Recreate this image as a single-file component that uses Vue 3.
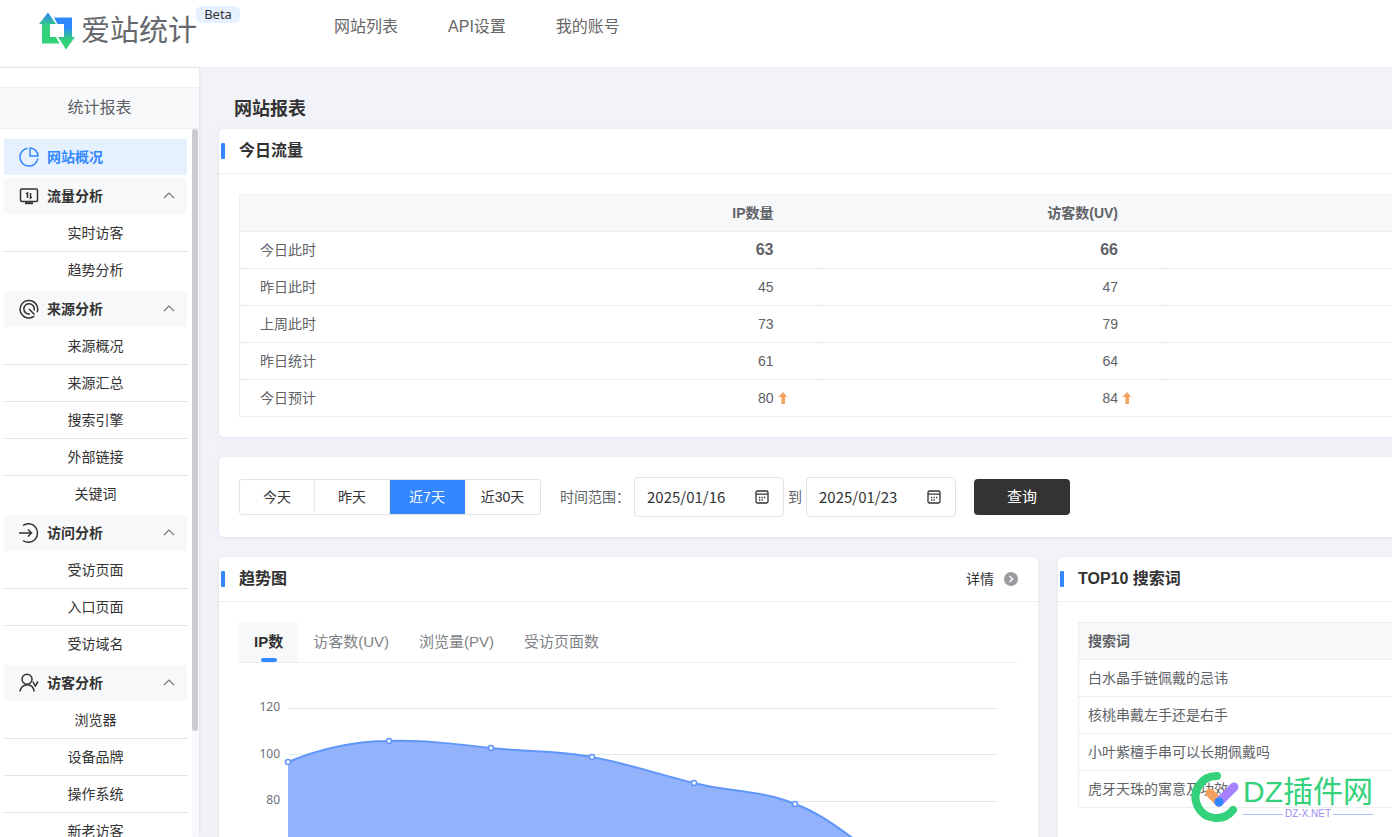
<script setup>
import { ref } from 'vue'

const nav = ['网站列表', 'API设置', '我的账号']
const groups = [
  { name: '流量分析', icon: 'screen', items: ['实时访客', '趋势分析'] },
  { name: '来源分析', icon: 'source', items: ['来源概况', '来源汇总', '搜索引擎', '外部链接', '关键词'] },
  { name: '访问分析', icon: 'enter', items: ['受访页面', '入口页面', '受访域名'] },
  { name: '访客分析', icon: 'user', items: ['浏览器', '设备品牌', '操作系统', '新老访客'] }
]
const rows = [
  { label: '今日此时', ip: 63, uv: 66, strong: true },
  { label: '昨日此时', ip: 45, uv: 47 },
  { label: '上周此时', ip: 73, uv: 79 },
  { label: '昨日统计', ip: 61, uv: 64 },
  { label: '今日预计', ip: 80, uv: 84, up: true }
]
const ranges = ['今天', '昨天', '近7天', '近30天']
const range = ref('近7天')
const from = ref('2025/01/16')
const to = ref('2025/01/23')
const tabs = ['IP数', '访客数(UV)', '浏览量(PV)', '受访页面数']
const tab = ref('IP数')
const words = ['白水晶手链佩戴的忌讳', '核桃串戴左手还是右手', '小叶紫檀手串可以长期佩戴吗', '虎牙天珠的寓意及功效']
const curve = 'M49 99C83 85 117 78 150 78C184 77 218 81 252 85C286 89 319 87 353 94C387 100 421 112 455 120C489 129 522 127 556 141C590 153 618 181 658 206'
const points = [[49, 99], [150, 78], [252, 85], [353, 94], [455, 120], [556, 141]]
</script>

<template>
  <div class="page">
    <header class="top">
      <a class="logo" href="#" aria-label="爱站统计">
        <svg width="36" height="38" viewBox="0 0 36 38">
          <defs>
            <linearGradient id="ga" x1="0" y1="0" x2="0" y2="1"><stop offset="0" stop-color="#2f80ff" /><stop offset=".45" stop-color="#33d17a" /></linearGradient>
            <linearGradient id="gb" x1="0" y1="0" x2="0" y2="1"><stop offset=".3" stop-color="#2f88ff" /><stop offset=".7" stop-color="#33d17a" /></linearGradient>
          </defs>
          <path fill="url(#ga)" d="M9 .5L17 12H11V25H17L20.500 31.500H3V12H0Z" />
          <path fill="url(#gb)" d="M15 5.500H33V25H36L27 37.500L19 25H25V12H18.500Z" />
        </svg>
        <span>爱站统计</span>
      </a>
      <span class="beta">Beta</span>
      <nav><a v-for="n in nav" :key="n" href="#">{{ n }}</a></nav>
    </header>

    <div class="body">
      <aside>
        <h2 class="side-title">统计报表</h2>
        <div class="side-scroll">
          <div class="menu">
            <a class="head active" href="#">
              <svg class="ico" viewBox="0 0 20 20"><path d="M8.500 1.200A9 9 0 1 0 18.800 11.500M11 1V9H19A8.200 8.200 0 0 0 11 1Z" /></svg>
              网站概况
            </a>
            <div v-for="g in groups" :key="g.name" class="group">
              <button class="head">
                <svg class="ico" viewBox="0 0 20 20">
                  <g v-if="g.icon === 'screen'"><rect x="1.500" y="3" width="17" height="12.500" rx="1.500" /><path d="M6 17.200H14" stroke-width="2" /><path d="M7 8L8.500 7V12M11.500 7V12L13 11" stroke-width="1.500" /></g>
                  <g v-else-if="g.icon === 'source'"><path d="M18.200 13.200A8.800 8.800 0 1 0 15.300 17.200M15 11.500A5.200 5.200 0 1 0 11 15M10 10L15.500 15.500M10 18.800A8.800 8.800 0 0 0 13 18.200" /></g>
                  <g v-else-if="g.icon === 'enter'"><path d="M4 2.500A9.200 9.200 0 1 1 4 17.500M0 10H12M9 6.500L12.500 10L9 13.500" /></g>
                  <g v-else><circle cx="8" cy="6.300" r="5" /><path d="M.8 18.500C2 14 5 11.800 8.500 11.800C11.800 11.800 14.500 14.500 15.300 18.500M13.800 8.500L16.300 13L19 8.500" /></g>
                </svg>
                {{ g.name }}
                <svg class="arrow" viewBox="0 0 12 12"><path d="M1 8L6 3L11 8" /></svg>
              </button>
              <a v-for="i in g.items" :key="i" class="sub" href="#">{{ i }}</a>
            </div>
          </div>
          <div class="track"><div class="thumb"></div></div>
        </div>
      </aside>

      <main>
        <h1>网站报表</h1>
        <section class="panel">
          <div class="panel-head"><h3>今日流量</h3></div>
          <div class="panel-body">
            <table class="flow">
              <thead><tr><th class="first"></th><th>IP数量</th><th>访客数(UV)</th><th>浏览量(PV)</th><th></th></tr></thead>
              <tbody>
                <tr v-for="r in rows" :key="r.label">
                  <td class="first">{{ r.label }}</td>
                  <td v-for="(v, k) in [r.ip, r.uv]" :key="k" :class="{ strong: r.strong }">{{ v }}<svg v-if="r.up" class="up" viewBox="0 0 10 12"><path fill="#f2a15f" d="M5 0L9.500 5H7V12H3.500V5H.5Z" /></svg></td>
                  <td></td><td></td>
                </tr>
              </tbody>
            </table>
          </div>
        </section>

        <section class="panel filter">
          <div class="seg">
            <button v-for="r in ranges" :key="r" :class="{ on: r === range }" @click="range = r">{{ r }}</button>
          </div>
          <label class="range-label" for="from">时间范围：</label>
          <div class="date">
            <input id="from" v-model="from" type="text" />
            <svg viewBox="0 0 14 14"><rect x="1" y="1" width="12" height="12" rx="1.500" /><path d="M1 4.200H13M4 7.500H5.300M6.500 7.500H7.800M9 7.500H10.300M4 10H5.300M6.500 10H7.800" /></svg>
          </div>
          <label class="to-label" for="to">到</label>
          <div class="date">
            <input id="to" v-model="to" type="text" />
            <svg viewBox="0 0 14 14"><rect x="1" y="1" width="12" height="12" rx="1.500" /><path d="M1 4.200H13M4 7.500H5.300M6.500 7.500H7.800M9 7.500H10.300M4 10H5.300M6.500 10H7.800" /></svg>
          </div>
          <button class="query">查询</button>
        </section>

        <div class="cols">
          <section class="panel">
            <div class="panel-head">
              <h3>趋势图</h3>
              <a class="more" href="#">详情
                <svg width="14" height="14" viewBox="0 0 14 14"><circle cx="7" cy="7" r="7" fill="#999b9e" /><path d="M5.500 4L8.500 7L5.500 10" fill="none" stroke="#fff" stroke-width="1.400" /></svg>
              </a>
            </div>
            <div class="panel-body">
              <div class="tabs">
                <button v-for="t in tabs" :key="t" :class="{ on: t === tab }" @click="tab = t">{{ t }}</button>
              </div>
              <svg class="chart" viewBox="0 0 779 300">
                <g stroke="#e6e8eb"><path d="M49 45.500H759M49 91.500H759M49 138.500H759" /></g>
                <g class="axis"><text x="41" y="48">120</text><text x="41" y="95">100</text><text x="41" y="141">80</text></g>
                <path :d="curve + 'V300H49Z'" fill="#92b3fc" />
                <path :d="curve" fill="none" stroke="#6096fa" stroke-width="2" />
                <circle v-for="p in points" :key="p[0]" :cx="p[0]" :cy="p[1]" r="2.500" fill="#fff" stroke="#6096fa" stroke-width="1.500" />
              </svg>
            </div>
          </section>
          <section class="panel">
            <div class="panel-head"><h3>TOP10 搜索词</h3></div>
            <div class="panel-body">
              <table class="words">
                <thead><tr><th>搜索词</th></tr></thead>
                <tbody><tr v-for="w in words" :key="w"><td>{{ w }}</td></tr></tbody>
              </table>
            </div>
          </section>
        </div>
      </main>
    </div>

    <div class="mark">
      <svg width="48" height="52" viewBox="0 0 48 52" fill="none" stroke-linecap="round">
        <path d="M26 5A21 21 0 1 0 42 39" stroke="#33d17a" stroke-width="8" />
        <path d="M19 22L28 31" stroke="#f2a15f" stroke-width="9" />
        <path d="M43 16L28 31" stroke="#a782ff" stroke-width="9" />
        <circle cx="28" cy="31" r="4.500" fill="#2f88ff" />
      </svg>
      <div class="mark-text">
        <div class="mark-name">DZ插件网</div>
        <div class="mark-site">DZ-X.NET</div>
      </div>
    </div>
  </div>
</template>

<style>
body { margin: 0; }
</style>

<style scoped>
.page { position: relative; height: 100vh; overflow: hidden; display: flex; flex-direction: column; background: #f2f3f8; color: #333; font: 14px/20px "Liberation Sans", "Noto Sans CJK SC", sans-serif; }
.page * { box-sizing: border-box; }
a { color: inherit; text-decoration: none; }
button { font: inherit; color: inherit; border: 0; background: none; padding: 0; cursor: pointer; }
h1, h2, h3 { margin: 0; }
.top { flex: none; height: 68px; display: flex; align-items: flex-start; padding-left: 39px; background: #fff; border-bottom: 1px solid #ebedf0; }
.logo { display: flex; gap: 6px; margin-top: 12px; font-size: 29px; line-height: 38px; color: #65686c; white-space: nowrap; }
.beta { margin-top: 6px; width: 44px; height: 17px; border-radius: 6px; background: #e6f1ff; font: 13px/17px "Noto Sans", sans-serif; text-align: center; margin-left: -1px; }
nav { display: flex; gap: 50px; margin: 17px 0 0 94px; font-size: 16px; color: #666; }
.body { flex: 1; min-height: 0; display: flex; }
aside { flex: none; width: 199px; display: flex; flex-direction: column; padding-top: 19px; background: #fff; box-shadow: 0 0 3px #d8dbe3; }
.side-title { flex: none; height: 42px; line-height: 40px; font-size: 16px; font-weight: 400; text-align: center; color: #5c5f64; background: #f7f8fa; border: solid #eceef0; border-width: 1px 0; }
.side-scroll { flex: 1; min-height: 0; overflow: hidden; display: flex; justify-content: space-between; padding-left: 4px; }
.menu { width: 183px; padding-top: 10px; }
.track { width: 7px; background: #f7f8fa; }
.thumb { width: 6px; height: 85%; border-radius: 3px; background: #c9cbcc; }
.head { width: 100%; height: 36px; display: flex; align-items: center; gap: 8px; padding: 0 12px 0 15px; background: #f7f8fa; font-weight: 700; }
.head.active { background: #e6f1ff; color: #3388ff; }
.ico { width: 20px; height: 20px; fill: none; stroke: currentColor; stroke-width: 1.5; }
.arrow { width: 12px; height: 12px; margin-left: auto; fill: none; stroke: #777; stroke-width: 1.2; }
.group { margin-top: 3px; }
.sub { display: block; height: 37px; line-height: 37px; text-align: center; border-top: 1px dotted transparent; }
.sub + .sub { border-top-color: #ccc; }
main { flex: 1 0 1698px; min-width: 0; padding: 28px 20px 20px; }
h1 { font-size: 18px; line-height: 26px; padding-left: 15px; margin-bottom: 7px; }
.panel { background: #fff; border-radius: 5px; box-shadow: 0 1px 4px #dfe2ea; margin-bottom: 20px; }
.panel-head { height: 45px; display: flex; justify-content: space-between; align-items: center; padding: 0 20px 0 2px; border-bottom: 1px solid #eceef0; }
h3 { display: flex; align-items: center; font-size: 16px; line-height: 20px; }
h3::before { content: ""; width: 4px; height: 16px; margin-right: 14px; border-radius: 1px; background: #3388ff; }
.panel-body { padding: 20px; }
table { width: 100%; table-layout: fixed; border-spacing: 0; border: 1px solid #eceef0; border-bottom: 0; color: #606266; }
th, td { height: 37px; padding: 0 49px 0 0; text-align: right; border-bottom: 1px dotted #ddd; }
th { background: #f7f8fa; border-bottom: 1px solid #eceef0; }
tr:last-child td { border-bottom: 1px solid #eceef0; }
.first { width: 238px; padding: 0 0 0 20px; text-align: left; }
.strong { font-size: 16px; font-weight: 700; }
.up { width: 10px; height: 12px; margin: 0 -14px 0 4px; vertical-align: -1px; }
.words th, .words td { padding: 0 9px; text-align: left; }
.filter { display: flex; align-items: center; padding: 20px; }
.seg { display: flex; height: 36px; border: 1px solid #e2e4e6; border-radius: 3px; }
.seg button { width: 75px; border-right: 1px solid #e8eaec; }
.seg button:last-child { border-right: 0; }
.seg .on { background: #3388ff; border-color: #3388ff; color: #fff; }
.range-label { margin: 0 4px 0 19px; color: #606266; }
.to-label { margin: 0 4px; color: #606266; }
.date { display: flex; align-items: center; width: 150px; height: 40px; padding: 0 14px 0 12px; border: 1px solid #e2e4e6; border-radius: 4px; }
.date input { flex: 1; min-width: 0; padding: 0; border: 0; outline: 0; background: none; color: #333; font: 15px/20px "Noto Sans CJK SC", sans-serif; }
.date svg { width: 14px; height: 14px; fill: none; stroke: #333; stroke-width: 1.3; }
.query { width: 96px; height: 36px; margin-left: 18px; border-radius: 4px; background: #333; color: #fff; font-size: 15px; }
.cols { display: grid; grid-template-columns: minmax(0, 1fr) minmax(0, 1fr); gap: 20px; }
.more { display: flex; align-items: center; gap: 10px; }
.tabs { display: flex; border-bottom: 1px solid #eceef0; font-size: 15px; color: #808285; }
.tabs button { height: 40px; padding: 0 15px; display: flex; flex-direction: column; align-items: center; justify-content: space-between; }
.tabs button::before { content: ""; height: 4px; }
.tabs button::after { content: ""; width: 16px; height: 4px; border-radius: 2px; }
.tabs .on { background: #f7f8fa; color: #333; font-weight: 700; }
.tabs .on::after { background: #3388ff; }
.chart { display: block; width: 100%; }
.axis text { font: 12px "Noto Sans", sans-serif; fill: #6e7079; text-anchor: end; }
.mark { position: absolute; right: 19px; bottom: 14px; display: flex; gap: 4px; }
.mark-name { margin-top: 4px; font-size: 30px; line-height: 34px; color: #33d17a; white-space: nowrap; }
.mark-site { display: flex; align-items: center; gap: 2px; font-size: 10px; line-height: 10px; color: #9d8cf5; }
.mark-site::before, .mark-site::after { content: ""; flex: 1; height: 1px; background: #a9bdfb; }
</style>
